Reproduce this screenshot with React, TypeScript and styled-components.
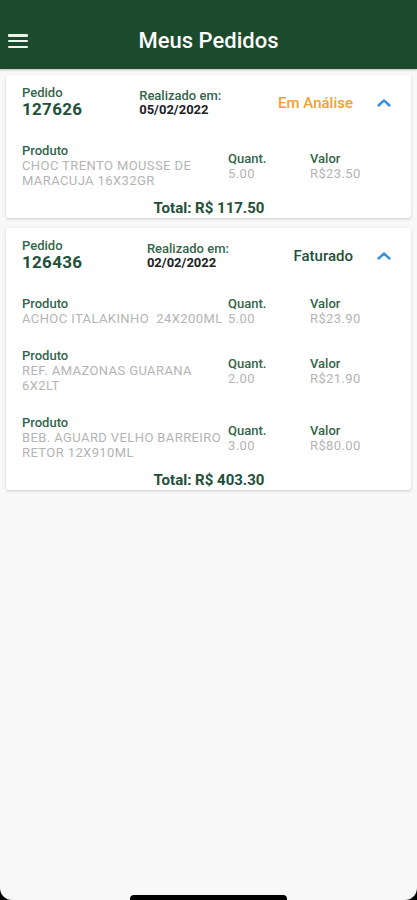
import styled, { createGlobalStyle } from 'styled-components'

const GlobalStyle = createGlobalStyle`
  html, body {
    margin: 0;
    padding: 0;
    background: #000;
  }
  body {
    font-family: Roboto, "Liberation Sans", Arial, sans-serif;
    -webkit-font-smoothing: antialiased;
  }
`

const Screen = styled.div`
  position: relative;
  min-height: 900px;
  background: #f8f8f8;
  border-radius: 0 0 12px 12px;
  overflow: hidden;
`

const Header = styled.header`
  height: 69px;
  box-sizing: border-box;
  background: #1b4a2c;
  display: flex;
  align-items: flex-end;
  padding: 0 8px 16px;
  position: relative;
  box-shadow: 0 1px 2px rgba(0, 0, 0, 0.25);
`

const Burger = styled.button`
  width: 20px;
  height: 14px;
  padding: 0;
  border: 0;
  background: transparent;
  display: flex;
  flex-direction: column;
  justify-content: space-between;
  margin-bottom: 5px;

  span {
    display: block;
    height: 2.5px;
    border-radius: 1px;
    background: #eef3ee;
  }
`

const Title = styled.h1`
  flex: 1;
  margin: 0 20px 0 0;
  text-align: center;
  color: #fff;
  font-size: 22px;
  line-height: 24px;
  font-weight: 500;
`

const List = styled.main`
  display: flex;
  flex-direction: column;
  gap: 10px;
  padding: 6px 6px;
`

const Card = styled.section`
  background: #fff;
  border-radius: 3px;
  box-shadow: 0 1px 3px rgba(0, 0, 0, 0.18);
  padding: 11px 15px 1px 16px;
`

const CardHead = styled.div`
  display: flex;
  align-items: center;
  justify-content: space-between;
  margin-bottom: 2px;
`

const Label = styled.div`
  color: #346549;
  font-size: 13px;
  line-height: 14px;
  font-weight: 500;
`

const OrderNo = styled.div`
  color: #22503a;
  font-size: 17px;
  line-height: 19px;
  font-weight: 700;
  letter-spacing: 0.3px;
`

const DateLabel = styled(Label)`
  line-height: 13px;
`

const DateValue = styled.div`
  color: #222;
  font-size: 13px;
  line-height: 13px;
  font-weight: 700;
  margin-top: 1px;
`

const StatusGroup = styled.div`
  display: flex;
  align-items: center;
  gap: 19px;
`

const Status = styled.span<{ $tone: 'pending' | 'billed' }>`
  font-size: 15px;
  font-weight: 500;
  color: ${p => (p.$tone === 'pending' ? '#f5a02e' : '#22503a')};
`

const Chevron = styled.svg`
  width: 24px;
  height: 24px;
  display: block;
`

const ItemRow = styled.div`
  display: grid;
  grid-template-columns: 206px 82px 1fr;
  align-items: center;
  padding-top: 23px;
`

const Muted = styled.div`
  color: #b4b4b4;
  font-size: 13px;
  line-height: 15px;
  letter-spacing: 0.4px;
  text-transform: uppercase;
`

const Total = styled.div`
  text-align: center;
  color: #22503a;
  font-size: 15px;
  line-height: 18px;
  font-weight: 700;
  padding-top: 11px;
`

const HomeBar = styled.div`
  position: absolute;
  left: 130px;
  bottom: -3px;
  width: 157px;
  height: 8px;
  border-radius: 4px;
  background: #000;
`

type Item = { name: string; qty: string; price: string }
type Order = {
  id: string
  date: string
  status: string
  tone: 'pending' | 'billed'
  items: Item[]
  total: string
}

const orders: Order[] = [
  {
    id: '127626',
    date: '05/02/2022',
    status: 'Em Análise',
    tone: 'pending',
    items: [{ name: 'CHOC TRENTO MOUSSE DE MARACUJA 16X32GR', qty: '5.00', price: 'R$23.50' }],
    total: 'R$ 117.50',
  },
  {
    id: '126436',
    date: '02/02/2022',
    status: 'Faturado',
    tone: 'billed',
    items: [
      { name: 'ACHOC ITALAKINHO\u00a0 24X200ML', qty: '5.00', price: 'R$23.90' },
      { name: 'REF. AMAZONAS GUARANA 6X2LT', qty: '2.00', price: 'R$21.90' },
      { name: 'BEB. AGUARD VELHO BARREIRO RETOR 12X910ML', qty: '3.00', price: 'R$80.00' },
    ],
    total: 'R$ 403.30',
  },
]

const OrderCard = ({ order }: { order: Order }) => (
  <Card>
    <CardHead>
      <div>
        <Label>Pedido</Label>
        <OrderNo>{order.id}</OrderNo>
      </div>
      <div>
        <DateLabel>Realizado em:</DateLabel>
        <DateValue>{order.date}</DateValue>
      </div>
      <StatusGroup>
        <Status $tone={order.tone}>{order.status}</Status>
        <Chevron viewBox="0 0 24 24" fill="none" stroke="#3f8fe0" strokeWidth="2.4" strokeLinecap="round" strokeLinejoin="round">
          <path d="M6.5 14.5 L12 9.5 L17.5 14.5" />
        </Chevron>
      </StatusGroup>
    </CardHead>
    {order.items.map(item => (
      <ItemRow key={item.name}>
        <div>
          <Label>Produto</Label>
          <Muted>{item.name}</Muted>
        </div>
        <div>
          <Label>Quant.</Label>
          <Muted>{item.qty}</Muted>
        </div>
        <div>
          <Label>Valor</Label>
          <Muted>{item.price}</Muted>
        </div>
      </ItemRow>
    ))}
    <Total>Total: {order.total}</Total>
  </Card>
)

const App = () => (
  <>
    <GlobalStyle />
    <Screen>
      <Header>
        <Burger aria-label="Menu">
          <span />
          <span />
          <span />
        </Burger>
        <Title>Meus Pedidos</Title>
      </Header>
      <List>
        {orders.map(o => (
          <OrderCard key={o.id} order={o} />
        ))}
      </List>
      <HomeBar />
    </Screen>
  </>
)

export default App
